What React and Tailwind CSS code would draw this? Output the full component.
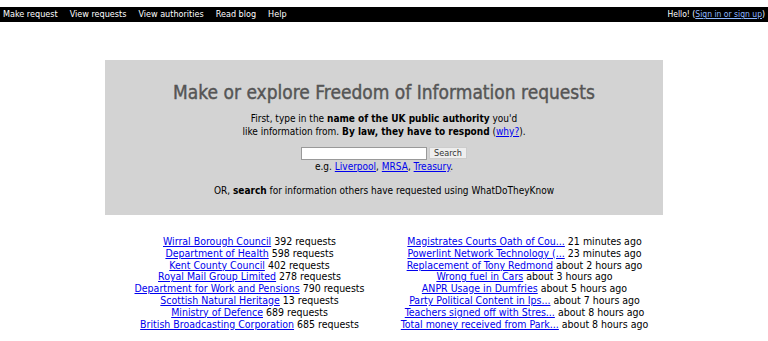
const bodies = [
  ['Wirral Borough Council', '392 requests'],
  ['Department of Health', '598 requests'],
  ['Kent County Council', '402 requests'],
  ['Royal Mail Group Limited', '278 requests'],
  ['Department for Work and Pensions', '790 requests'],
  ['Scottish Natural Heritage', '13 requests'],
  ['Ministry of Defence', '689 requests'],
  ['British Broadcasting Corporation', '685 requests'],
]

const recent = [
  ['Magistrates Courts Oath of Cou...', '21 minutes ago'],
  ['Powerlint Network Technology (...', '23 minutes ago'],
  ['Replacement of Tony Redmond', 'about 2 hours ago'],
  ['Wrong fuel in Cars', 'about 3 hours ago'],
  ['ANPR Usage in Dumfries', 'about 5 hours ago'],
  ['Party Political Content in Ips...', 'about 7 hours ago'],
  ['Teachers signed off with Stres...', 'about 8 hours ago'],
  ['Total money received from Park...', 'about 8 hours ago'],
]

const link = 'text-[#0000ee] underline'

function ListColumn({ rows }) {
  return (
    <ul className="w-[275px] text-center text-[10.5px] leading-[11.8px]">
      {rows.map(([name, note]) => (
        <li key={name}>
          <a href="#" className={link}>{name}</a> {note}
        </li>
      ))}
    </ul>
  )
}

export default function App() {
  return (
    <div className="min-h-[341px] bg-white text-[10px] text-black font-['DejaVu_Sans_Condensed','DejaVu_Sans',sans-serif]">
      <div className="pt-[7px]">
        <div className="flex h-[15px] items-center justify-between bg-black px-[3px] text-[9px] text-white leading-none">
          <nav className="flex gap-[12px]">
            <a href="#">Make request</a>
            <a href="#">View requests</a>
            <a href="#">View authorities</a>
            <a href="#">Read blog</a>
            <a href="#">Help</a>
          </nav>
          <span className="text-[8.5px]">
            Hello! (<a href="#" className="text-[#8fb8ff] underline">Sign in or sign up</a>)
          </span>
        </div>
      </div>

      <div className="mx-[105px] mt-[38px] h-[155px] bg-[#d3d3d3] pt-[20px] text-center">
        <h1 className="text-[19px] leading-[24px] text-[#555] [-webkit-text-stroke:0.4px_#555]">
          Make or explore Freedom of Information requests
        </h1>
        <p className="mt-[8px] leading-[13px]">
          First, type in the <b>name of the UK public authority</b> you'd
          <br />
          like information from. <b>By law, they have to respond</b> (<a href="#" className={link}>why?</a>).
        </p>
        <div className="mt-[9px] flex justify-center gap-[2px]">
          <input className="h-[13px] w-[126px] border border-[#999] bg-white" />
          <button className="h-[12px] w-[38px] border border-[#ccc] bg-[#eee] text-[9px] leading-none text-[#333]">
            Search
          </button>
        </div>
        <p className="leading-[13px]">
          e.g. <a href="#" className={link}>Liverpool</a>, <a href="#" className={link}>MRSA</a>,{' '}
          <a href="#" className={link}>Treasury</a>.
        </p>
        <p className="mt-[11px] leading-[13px]">
          OR, <b>search</b> for information others have requested using WhatDoTheyKnow
        </p>
      </div>

      <div className="mt-[21px] flex pl-[112px]">
        <ListColumn rows={bodies} />
        <ListColumn rows={recent} />
      </div>
    </div>
  )
}
